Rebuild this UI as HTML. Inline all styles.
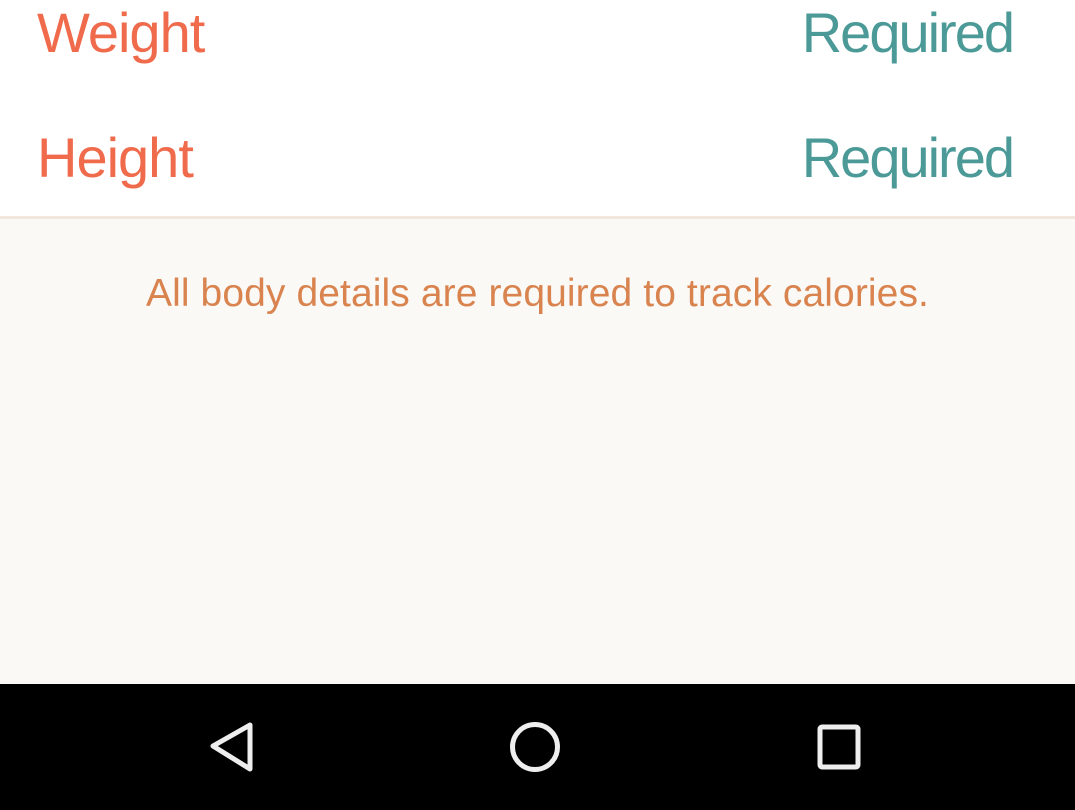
<!DOCTYPE html>
<html><head><meta charset="utf-8"><style>
html,body{margin:0;padding:0;width:1075px;height:810px;overflow:hidden;font-family:"Liberation Sans",sans-serif}
.top{position:absolute;left:0;top:0;width:1075px;height:217px;background:#fff}
.line{position:absolute;left:0;top:216px;width:1075px;height:3px;background:#f3e6dc}
.mid{position:absolute;left:0;top:219px;width:1075px;height:465px;background:#faf9f6}
.nav{position:absolute;left:0;top:684px;width:1075px;height:126px;background:#000}
.t{position:absolute;font-size:56px;line-height:56px;white-space:nowrap;letter-spacing:-1px}
.l{left:37px;color:#f06a4c}
.r{right:62px;color:#4b9a97;text-align:right;letter-spacing:-2px}
.msg{position:absolute;left:0;width:1075px;text-align:center;top:273px;font-size:39px;line-height:42px;color:#d9834f;letter-spacing:0.1px}
</style></head><body>
<div class="top"></div><div class="line"></div><div class="mid"></div>
<div class="t l" style="top:5px">Weight</div>
<div class="t r" style="top:5px">Required</div>
<div class="t l" style="top:130px">Height</div>
<div class="t r" style="top:130px">Required</div>
<div class="msg">All body details are required to track calories.</div>
<div class="nav">
<svg width="1075" height="126" style="position:absolute;left:0;top:0">
<path d="M250 41 L250 85 L213 62 Z" fill="none" stroke="#eee" stroke-width="5" stroke-linejoin="round"/>
<circle cx="535" cy="63" r="22.5" fill="none" stroke="#eee" stroke-width="5"/>
<rect x="820" y="43" width="38" height="40" rx="2" fill="none" stroke="#eee" stroke-width="5"/>
</svg>
</div>
</body></html>
